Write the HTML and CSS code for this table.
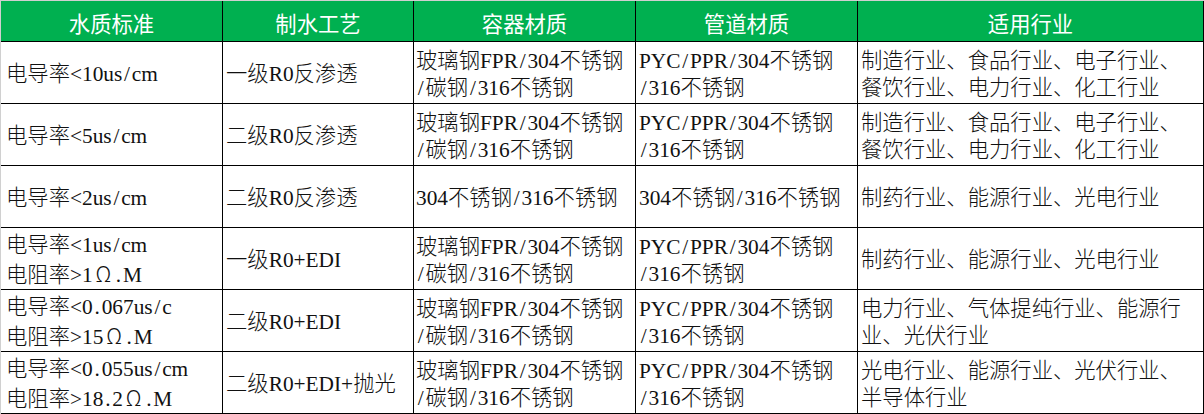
FILE: index.html
```html
<!DOCTYPE html>
<html lang="zh-CN">
<head>
<meta charset="utf-8">
<title>水质标准</title>
<link rel="stylesheet" href="styles.css">
</head>
<body>
<div class="sheet">
  <div class="cell hd">水质标准</div>
  <div class="cell hd">制水工艺</div>
  <div class="cell hd">容器材质</div>
  <div class="cell hd">管道材质</div>
  <div class="cell hd">适用行业</div>

  <div class="cell c1"><div>电导率&lt;10us<span class="sl">/</span>cm</div></div>
  <div class="cell c2"><div>一级R0反渗透</div></div>
  <div class="cell c3"><div>玻璃钢FPR<span class="sl">/</span>304不锈钢<br><span class="sl">/</span>碳钢<span class="sl">/</span>316不锈钢</div></div>
  <div class="cell c4"><div>PYC<span class="sl">/</span>PPR<span class="sl">/</span>304不锈钢<br><span class="sl">/</span>316不锈钢</div></div>
  <div class="cell c5"><div>制造行业、食品行业、电子行业、<br>餐饮行业、电力行业、化工行业</div></div>

  <div class="cell c1"><div>电导率&lt;5us<span class="sl">/</span>cm</div></div>
  <div class="cell c2"><div>二级R0反渗透</div></div>
  <div class="cell c3"><div>玻璃钢FPR<span class="sl">/</span>304不锈钢<br><span class="sl">/</span>碳钢<span class="sl">/</span>316不锈钢</div></div>
  <div class="cell c4"><div>PYC<span class="sl">/</span>PPR<span class="sl">/</span>304不锈钢<br><span class="sl">/</span>316不锈钢</div></div>
  <div class="cell c5"><div>制造行业、食品行业、电子行业、<br>餐饮行业、电力行业、化工行业</div></div>

  <div class="cell c1"><div>电导率&lt;2us<span class="sl">/</span>cm</div></div>
  <div class="cell c2"><div>二级R0反渗透</div></div>
  <div class="cell c3"><div>304不锈钢<span class="sl">/</span>316不锈钢</div></div>
  <div class="cell c4"><div>304不锈钢<span class="sl">/</span>316不锈钢</div></div>
  <div class="cell c5"><div>制药行业、能源行业、光电行业</div></div>

  <div class="cell c1"><div>电导率&lt;1us<span class="sl">/</span>cm<br>电阻率&gt;1<span class="w">Ω</span><span class="dt">.</span>M</div></div>
  <div class="cell c2"><div>一级R0+EDI</div></div>
  <div class="cell c3"><div>玻璃钢FPR<span class="sl">/</span>304不锈钢<br><span class="sl">/</span>碳钢<span class="sl">/</span>316不锈钢</div></div>
  <div class="cell c4"><div>PYC<span class="sl">/</span>PPR<span class="sl">/</span>304不锈钢<br><span class="sl">/</span>316不锈钢</div></div>
  <div class="cell c5"><div>制药行业、能源行业、光电行业</div></div>

  <div class="cell c1"><div>电导率&lt;0<span class="dt">.</span>067us<span class="sl">/</span>c<br>电阻率&gt;15<span class="w">Ω</span><span class="dt">.</span>M</div></div>
  <div class="cell c2"><div>二级R0+EDI</div></div>
  <div class="cell c3"><div>玻璃钢FPR<span class="sl">/</span>304不锈钢<br><span class="sl">/</span>碳钢<span class="sl">/</span>316不锈钢</div></div>
  <div class="cell c4"><div>PYC<span class="sl">/</span>PPR<span class="sl">/</span>304不锈钢<br><span class="sl">/</span>316不锈钢</div></div>
  <div class="cell c5"><div>电力行业、气体提纯行业、能源行<br>业、光伏行业</div></div>

  <div class="cell c1"><div>电导率&lt;0<span class="dt">.</span>055us<span class="sl">/</span>cm<br>电阻率&gt;18<span class="dt">.</span>2<span class="w">Ω</span><span class="dt">.</span>M</div></div>
  <div class="cell c2"><div>二级R0+EDI+抛光</div></div>
  <div class="cell c3"><div>玻璃钢FPR<span class="sl">/</span>304不锈钢<br><span class="sl">/</span>碳钢<span class="sl">/</span>316不锈钢</div></div>
  <div class="cell c4"><div>PYC<span class="sl">/</span>PPR<span class="sl">/</span>304不锈钢<br><span class="sl">/</span>316不锈钢</div></div>
  <div class="cell c5"><div>光电行业、能源行业、光伏行业、<br>半导体行业</div></div>
</div>
</body>
</html>
```

FILE: styles.css
```css
html, body {
  margin: 0;
  padding: 0;
  background: #ffffff;
}

.sheet {
  box-sizing: border-box;
  width: 1204px;
  height: 414px;
  display: grid;
  grid-template-columns: 221px 190px 221px 221px 345px;
  grid-template-rows: 40px repeat(6, 61px);
  gap: 1px;
  background: #000000;
  border-top: 1px solid #d0d0d0;
  border-left: 1px solid #d0d0d0;
  padding: 0 1px 1px 0;
}

.cell {
  display: flex;
  align-items: center;
  background: #ffffff;
  color: #111111;
  font-family: "Liberation Serif", "Noto Sans CJK SC", serif;
  font-size: 21.33px;
  font-weight: 300;
  line-height: 27px;
  white-space: nowrap;
  overflow: hidden;
  padding: 4px 0 0 3px;
  box-sizing: border-box;
}

.cell .w {
  display: inline-block;
  width: 21.33px;
  text-align: center;
  font-family: "Noto Sans CJK SC", sans-serif;
}

.cell .sl {
  display: inline-block;
  width: 9.5px;
  text-align: center;
}

.cell .dt {
  display: inline-block;
  width: 9px;
  text-align: center;
}

.hd {
  background: #00b050;
  color: #ffffff;
  justify-content: center;
  font-family: "Noto Sans CJK SC", sans-serif;
  font-weight: 400;
  padding: 3px 0 0 0;
}

.c1 { padding-left: 5px; }
.c2 { padding-left: 3px; }
.c3 { padding-left: 2px; }
.c4 { padding-left: 3px; }
.c5 { padding-left: 3px; }
```
